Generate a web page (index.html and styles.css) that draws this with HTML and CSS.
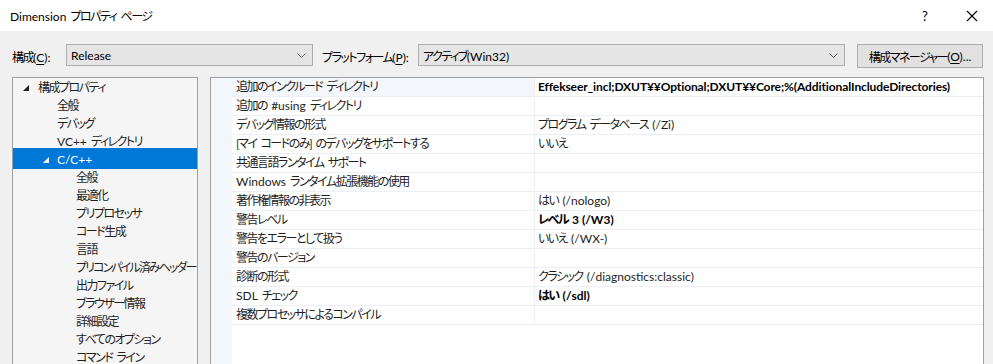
FILE: index.html
```html
<!DOCTYPE html>
<html lang="ja">
<head>
<meta charset="utf-8">
<title>Dimension プロパティ ページ</title>
<link rel="stylesheet" href="styles.css">
</head>
<body>
<div class="window">
  <div class="titlebar">
    <span class="title"><span class="en">Dimension</span> プロパティ ページ</span>
    <span class="help en">?</span>
    <span class="close">
      <svg width="12" height="12" viewBox="0 0 12 12"><path d="M1 1 L11 11 M11 1 L1 11" stroke="#000" stroke-width="1.1" fill="none"/></svg>
    </span>
  </div>
  <div class="toolbar">
    <span class="label label-config">構成<span class="en">(<u>C</u>):</span></span>
    <div class="combo combo-config">
      <span class="combo-text en">Release</span>
      <svg class="chevron" width="9" height="5" viewBox="0 0 9 5"><path d="M0.5 0.5 L4.5 4.5 L8.5 0.5" stroke="#606060" fill="none"/></svg>
    </div>
    <span class="label label-platform">プラットフォーム<span class="en">(<u>P</u>):</span></span>
    <div class="combo combo-platform">
      <span class="combo-text">アクティブ<span class="en">(Win32)</span></span>
      <svg class="chevron" width="9" height="5" viewBox="0 0 9 5"><path d="M0.5 0.5 L4.5 4.5 L8.5 0.5" stroke="#606060" fill="none"/></svg>
    </div>
    <div class="button">構成マネージャー<span class="en">(<u>O</u>)...</span></div>
  </div>
  <div class="main">
    <div class="tree">
      <div class="node lvl0"><svg class="tri" width="6" height="6" viewBox="0 0 6 6"><polygon points="6,0 6,6 0,6" fill="#1e1e1e"/></svg><span>構成プロパティ</span></div>
      <div class="node lvl1">全般</div>
      <div class="node lvl1">デバッグ</div>
      <div class="node lvl1"><span class="en">VC++</span>&nbsp;ディレクトリ</div>
      <div class="node lvl1 expanded selected"><svg class="tri" width="6" height="6" viewBox="0 0 6 6"><polygon points="6,0 6,6 0,6" fill="#fff"/></svg><span class="en">C/C++</span></div>
      <div class="node lvl2">全般</div>
      <div class="node lvl2">最適化</div>
      <div class="node lvl2">プリプロセッサ</div>
      <div class="node lvl2">コード生成</div>
      <div class="node lvl2">言語</div>
      <div class="node lvl2 tight">プリコンパイル済みヘッダー</div>
      <div class="node lvl2">出力ファイル</div>
      <div class="node lvl2">ブラウザー情報</div>
      <div class="node lvl2">詳細設定</div>
      <div class="node lvl2">すべてのオプション</div>
      <div class="node lvl2">コマンド ライン</div>
    </div>
    <div class="grid">
      <div class="gutter"></div>
      <div class="rows">
        <div class="row current"><div class="name">追加のインクルード ディレクトリ</div><div class="value bold en path">Effekseer_incl;DXUT¥¥Optional;DXUT¥¥Core;%(AdditionalIncludeDirectories)</div></div>
        <div class="row"><div class="name">追加の <span class="en">#using</span> ディレクトリ</div><div class="value"></div></div>
        <div class="row"><div class="name">デバッグ情報の形式</div><div class="value">プログラム データベース <span class="en">(/Zi)</span></div></div>
        <div class="row"><div class="name">[マイ コードのみ] のデバッグをサポートする</div><div class="value">いいえ</div></div>
        <div class="row"><div class="name">共通言語ランタイム サポート</div><div class="value"></div></div>
        <div class="row"><div class="name"><span class="en">Windows</span> ランタイム拡張機能の使用</div><div class="value"></div></div>
        <div class="row"><div class="name">著作権情報の非表示</div><div class="value">はい <span class="en">(/nologo)</span></div></div>
        <div class="row"><div class="name">警告レベル</div><div class="value bold">レベル <span class="en">3 (/W3)</span></div></div>
        <div class="row"><div class="name">警告をエラーとして扱う</div><div class="value">いいえ <span class="en">(/WX-)</span></div></div>
        <div class="row"><div class="name">警告のバージョン</div><div class="value"></div></div>
        <div class="row"><div class="name">診断の形式</div><div class="value">クラシック <span class="en">(/diagnostics:classic)</span></div></div>
        <div class="row"><div class="name"><span class="en">SDL</span> チェック</div><div class="value bold">はい <span class="en">(/sdl)</span></div></div>
        <div class="row"><div class="name">複数プロセッサによるコンパイル</div><div class="value"></div></div>
      </div>
    </div>
  </div>
</div>
</body>
</html>
```
FILE: styles.css
```css
html, body {
  margin: 0;
  padding: 0;
}
body {
  width: 993px;
  height: 364px;
  overflow: hidden;
  background: #f0f0f0;
  font-family: Lato, "Noto Sans CJK JP", sans-serif;
  font-size: 12px;
  font-feature-settings: "palt";
  letter-spacing: -1.5px;
  word-spacing: 2.5px;
  color: #000;
}
.en {
  letter-spacing: 0;
  word-spacing: 0;
}
.window {
  display: flex;
  flex-direction: column;
  height: 364px;
}
.titlebar {
  height: 31px;
  background: #fff;
  display: flex;
  align-items: center;
  padding-left: 10px;
  box-sizing: border-box;
}
.title {
  flex: 1;
}
.help {
  width: 14px;
  margin-right: 34px;
  font-size: 13px;
  text-align: center;
}
.close {
  display: flex;
  width: 12px;
  margin-right: 15px;
}
.toolbar {
  display: flex;
  align-items: center;
  padding-top: 13px;
  height: 24px;
}
.toolbar > * {
  flex-shrink: 0;
}
.label {
  white-space: nowrap;
}
.label-config {
  margin-left: 12px;
  width: 54px;
}
.label-platform {
  margin-left: 9px;
  width: 96px;
}
.combo {
  height: 22px;
  box-sizing: border-box;
  border: 1px solid #adadad;
  background: #e5e5e5;
  display: flex;
  align-items: center;
  padding-left: 4px;
  padding-right: 6px;
  align-self: flex-start;
}
.combo-config {
  width: 247px;
}
.combo-platform {
  width: 427px;
}
.combo-text {
  flex: 1;
}
.chevron {
  display: block;
}
.button {
  margin-left: 12px;
  width: 126px;
  height: 24px;
  box-sizing: border-box;
  border: 1px solid #adadad;
  background: #e1e1e1;
  display: flex;
  align-items: center;
  justify-content: center;
}
.main {
  display: flex;
  margin-top: 9px;
  flex: 1;
  min-height: 0;
}
.tree {
  margin-left: 12px;
  width: 186px;
  flex-shrink: 0;
  box-sizing: border-box;
  border: 1px solid #a0a0a0;
  border-bottom: none;
  background: #f5f5f5;
  padding-top: 1px;
  overflow: hidden;
}
.node {
  height: 18px;
  line-height: 18px;
  display: flex;
  align-items: center;
  white-space: nowrap;
  color: #1e1e1e;
}
.node .tri {
  display: block;
  margin-right: 9px;
  flex-shrink: 0;
}
.lvl0 {
  padding-left: 10px;
}
.lvl1 {
  padding-left: 44px;
}
.lvl1.expanded {
  padding-left: 30px;
}
.lvl1.expanded .tri {
  margin-right: 8px;
}
.lvl2 {
  padding-left: 63px;
}
.tight {
  letter-spacing: -1.9px;
}
.selected {
  background: #0078d7;
  color: #fff;
  box-shadow: 0 -3px 0 #0078d7;
}
.grid {
  margin-left: 12px;
  width: 774px;
  flex-shrink: 0;
  box-sizing: border-box;
  border: 1px solid #a0a0a0;
  border-bottom: none;
  background: #fff;
  display: flex;
}
.gutter {
  width: 21px;
  background: #f3f6fb;
  align-self: stretch;
}
.rows {
  flex: 1;
}
.row {
  display: flex;
  height: 19px;
  box-sizing: border-box;
  border-bottom: 1px solid #eceff6;
  line-height: 18px;
}
.name {
  width: 303px;
  padding-left: 4px;
  box-sizing: border-box;
  border-right: 1px solid #eceff6;
  white-space: nowrap;
  color: #1e1e1e;
}
.row.current .name {
  background: #f3f6fb;
}
.value {
  flex: 1;
  padding-left: 3px;
  white-space: nowrap;
  color: #1e1e1e;
}
.bold {
  font-weight: bold;
  color: #000;
}
.value.path {
  letter-spacing: -0.1px;
}
u {
  text-decoration: underline;
  text-underline-offset: 2px;
}
```
